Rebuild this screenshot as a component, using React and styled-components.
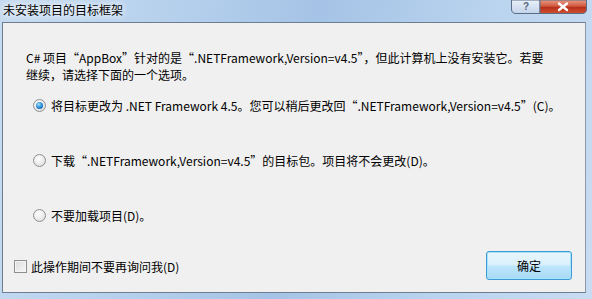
import React from 'react'
import styled, { createGlobalStyle } from 'styled-components'

const Global = createGlobalStyle`
  html, body { margin: 0; padding: 0; }
  body {
    width: 592px;
    height: 299px;
    overflow: hidden;
    font-family: "Noto Sans CJK SC", "Noto Sans", sans-serif;
    font-size: 12px;
    color: #000;
  }
`

const options = [
  { label: '将目标更改为 .NET Framework 4.5。您可以稍后更改回“.NETFramework,Version=v4.5”(C)。', checked: true },
  { label: '下载“.NETFramework,Version=v4.5”的目标包。项目将不会更改(D)。', checked: false },
  { label: '不要加载项目(D)。', checked: false },
]

function CaptionButtons() {
  return (
    <svg width="76" height="14" viewBox="0 0 76 14">
      <defs>
        <linearGradient id="helpG" x1="0" y1="0" x2="0" y2="1">
          <stop offset="0" stopColor="#e9f0f9" />
          <stop offset="1" stopColor="#c3d4e9" />
        </linearGradient>
        <linearGradient id="closeG" x1="0" y1="0" x2="0" y2="1">
          <stop offset="0" stopColor="#e99a84" />
          <stop offset="0.45" stopColor="#d25a41" />
          <stop offset="0.55" stopColor="#b8311c" />
          <stop offset="1" stopColor="#d0502f" />
        </linearGradient>
      </defs>
      <path d="M0.5 0 V9 Q0.5 13.5 5 13.5 H29 V0 Z" fill="url(#helpG)" stroke="#5a6e86" />
      <path d="M29 0 V13.5 H71 Q75.5 13.5 75.5 9 V0 Z" fill="url(#closeG)" stroke="#5a6e86" />
      <text x="15" y="10" textAnchor="middle" fontFamily="Liberation Sans, sans-serif" fontWeight="bold" fontSize="10" fill="#56677c">?</text>
      <path d="M48 3.5 L56 10 M56 3.5 L48 10" stroke="#ffffff" strokeWidth="2.4" strokeLinecap="round" />
    </svg>
  )
}

function App() {
  return (
    <Window>
      <Global />
      <TitleBar>
        <Title>未安装项目的目标框架</Title>
        <Caption>
          <CaptionButtons />
        </Caption>
      </TitleBar>
      <Client>
        <Message>
          C# 项目“AppBox”针对的是“.NETFramework,Version=v4.5”，但此计算机上没有安装它。若要继续，请选择下面的一个选项。
        </Message>
        <Options>
          {options.map((o, i) => (
            <Option key={i}>
              <Radio checked={o.checked} />
              <span>{o.label}</span>
            </Option>
          ))}
        </Options>
        <Footer>
          <CheckRow>
            <Check />
            <span>此操作期间不要再询问我(D)</span>
          </CheckRow>
          <OkButton>确定</OkButton>
        </Footer>
      </Client>
    </Window>
  )
}

export default App

const Window = styled.div`
  width: 592px;
  height: 299px;
  box-sizing: border-box;
  display: flex;
  flex-direction: column;
  padding: 0 6px 6px 2px;
  background: linear-gradient(100deg, #c6dbf1 0%, #b4cfec 30%, #a5c3e6 50%, #b9d3ee 75%, #c8dcf2 100%);
`

const TitleBar = styled.div`
  height: 22px;
  display: flex;
  justify-content: space-between;
  align-items: flex-start;
`

const Title = styled.div`
  padding: 0 0 0 1px;
  line-height: 19px;
  font-size: 12px;
  text-shadow: 0 0 6px #fff, 0 0 8px #fff;
`

const Caption = styled.div`
  display: flex;
  margin-right: -1px;
  svg { display: block; }
`

const Client = styled.div`
  flex: 1;
  background: #f0f0f0;
  border: 1px solid #6e7e90;
  border-right-color: #8a98a8;
  display: flex;
  flex-direction: column;
  padding: 26px 13px 12px 23px;
`

const Message = styled.div`
  line-height: 17px;
  padding-right: 19px;
`

const Options = styled.div`
  display: flex;
  flex-direction: column;
  gap: 38px;
  margin-top: 14px;
  padding-left: 7px;
`

const Option = styled.div`
  display: flex;
  align-items: center;
  gap: 5px;
  height: 17px;
`

const Radio = styled.span`
  width: 11px;
  height: 11px;
  border-radius: 50%;
  border: 1px solid #8f8f8f;
  background: radial-gradient(circle at 40% 35%, #ffffff, #d8d8d8);
  display: inline-flex;
  align-items: center;
  justify-content: center;
  flex-shrink: 0;
  &::after {
    content: '';
    display: ${p => (p.checked ? 'block' : 'none')};
    width: 7px;
    height: 7px;
    border-radius: 50%;
    background: radial-gradient(circle at 40% 35%, #9ee0ff, #1a7cc8 60%, #0b4f9a);
  }
`

const Footer = styled.div`
  margin-top: auto;
  display: flex;
  justify-content: space-between;
  align-items: flex-start;
  margin-left: -12px;
`

const CheckRow = styled.div`
  display: flex;
  align-items: center;
  gap: 4px;
  height: 17px;
`

const Check = styled.span`
  width: 11px;
  height: 11px;
  border: 1px solid #8f8f8f;
  background: linear-gradient(135deg, #dcdcdc, #f8f8f8);
  box-shadow: inset 0 0 0 1px #f4f4f4;
`

const OkButton = styled.div`
  width: 86px;
  height: 29px;
  box-sizing: border-box;
  margin-top: -7px;
  border: 1px solid #3c9ad6;
  border-radius: 3px;
  box-shadow: inset 0 0 0 1px #a8e2fb;
  background: linear-gradient(#eaf6fd 0%, #d9f0fc 48%, #bee6fd 52%, #a7d9f5 100%);
  display: flex;
  align-items: center;
  justify-content: center;
  font-size: 12px;
`
